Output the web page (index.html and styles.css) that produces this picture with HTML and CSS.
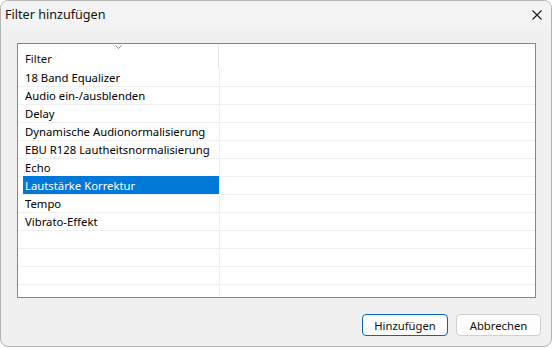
FILE: index.html
```html
<!DOCTYPE html>
<html lang="de">
<head>
<meta charset="utf-8">
<title>Filter hinzufügen</title>
<link rel="stylesheet" href="styles.css">
</head>
<body>
<div class="window">
  <div class="titlebar">
    <span class="title">Filter hinzufügen</span>
    <span class="close">
      <svg width="10" height="10" viewBox="0 0 10 10"><path d="M0.5 0.5 L9.5 9.5 M9.5 0.5 L0.5 9.5" stroke="#1a1a1a" stroke-width="1.1" fill="none"/></svg>
    </span>
  </div>
  <div class="content">
    <div class="listbox">
      <div class="header">
        <div class="hcell">
          <svg class="sort" width="7" height="4" viewBox="0 0 7 4"><path d="M0.5 0.5 L3.5 3.5 L6.5 0.5" stroke="#8a8a8a" stroke-width="1" fill="none"/></svg>
          <span>Filter</span>
        </div>
      </div>
      <div class="rows">
        <div class="row"><div class="cell"><span class="label">18 Band Equalizer</span></div></div>
        <div class="row"><div class="cell"><span class="label">Audio ein-/ausblenden</span></div></div>
        <div class="row"><div class="cell"><span class="label">Delay</span></div></div>
        <div class="row"><div class="cell"><span class="label">Dynamische Audionormalisierung</span></div></div>
        <div class="row"><div class="cell"><span class="label">EBU R128 Lautheitsnormalisierung</span></div></div>
        <div class="row"><div class="cell"><span class="label">Echo</span></div></div>
        <div class="row"><div class="cell"><span class="label selected">Lautstärke Korrektur</span></div></div>
        <div class="row"><div class="cell"><span class="label">Tempo</span></div></div>
        <div class="row"><div class="cell"><span class="label">Vibrato-Effekt</span></div></div>
        <div class="row"><div class="cell"><span class="label"></span></div></div>
        <div class="row"><div class="cell"><span class="label"></span></div></div>
        <div class="row"><div class="cell"><span class="label"></span></div></div>
        <div class="row"><div class="cell"><span class="label"></span></div></div>
      </div>
    </div>
    <div class="buttons">
      <button class="btn primary">Hinzufügen</button>
      <button class="btn">Abbrechen</button>
    </div>
  </div>
</div>
</body>
</html>
```

FILE: styles.css
```css
html, body {
  margin: 0;
  padding: 0;
  background: #ffffff;
}
body {
  font-family: "Noto Sans", "Segoe UI", sans-serif;
  color: #000;
}
.window {
  box-sizing: border-box;
  width: 552px;
  height: 347px;
  border: 1px solid #b4b4b4;
  border-radius: 8px;
  background: #f0f0f0;
  overflow: hidden;
  display: flex;
  flex-direction: column;
}
.titlebar {
  height: 28px;
  flex: none;
  background: #f3f3f3;
  display: flex;
  align-items: center;
  justify-content: space-between;
  padding: 0 9px 0 4px;
}
.title {
  font-size: 12.6px;
  color: #111;
  line-height: 1;
  margin-top: 1px;
}
.close {
  display: flex;
  width: 10px;
  height: 10px;
  margin-top: 0;
}
.content {
  flex: 1;
  display: flex;
  flex-direction: column;
  padding: 14px 15px 0 16px;
}
.listbox {
  box-sizing: border-box;
  height: 255px;
  border: 1px solid #82868e;
  background: #fff;
  display: flex;
  flex-direction: column;
  overflow: hidden;
}
.header {
  height: 25px;
  flex: none;
  display: flex;
}
.hcell {
  position: relative;
  box-sizing: border-box;
  width: 201px;
  height: 24px;
  margin-top: 1px;
  border-right: 1px solid #e5e5e5;
  padding-left: 7px;
  display: flex;
  align-items: center;
  font-size: 11.3px;
  color: #111;
}
.hcell span {
  margin-top: 2px;
}
.sort {
  position: absolute;
  left: 97px;
  top: 0px;
}
.rows {
  flex: 1;
  overflow: hidden;
}
.row {
  height: 17px;
  border-bottom: 1px solid #f0f0f0;
  display: flex;
}
.cell {
  box-sizing: border-box;
  width: 202px;
  border-right: 1px solid #f0f0f0;
  padding-left: 5px;
  display: flex;
}
.label {
  flex: 1;
  padding-left: 2px;
  font-size: 11.3px;
  line-height: 17px;
  color: #000;
  white-space: nowrap;
}
.label.selected {
  background: #0078d7;
  color: #fff;
  margin-top: -1px;
  height: 18px;
  line-height: 19px;
}
.buttons {
  display: flex;
  justify-content: flex-end;
  gap: 8px;
  margin-top: 16px;
}
.btn {
  box-sizing: border-box;
  height: 22px;
  width: 85px;
  border: 1px solid #d0d0d0;
  border-radius: 4px;
  background: #fdfdfd;
  font-family: "Noto Sans", "Segoe UI", sans-serif;
  font-size: 11.3px;
  color: #111;
  padding: 0;
}
.btn.primary {
  width: 86px;
  border-color: #0067c0;
}
.buttons .btn:last-child {
  margin-right: -5px;
}
```
